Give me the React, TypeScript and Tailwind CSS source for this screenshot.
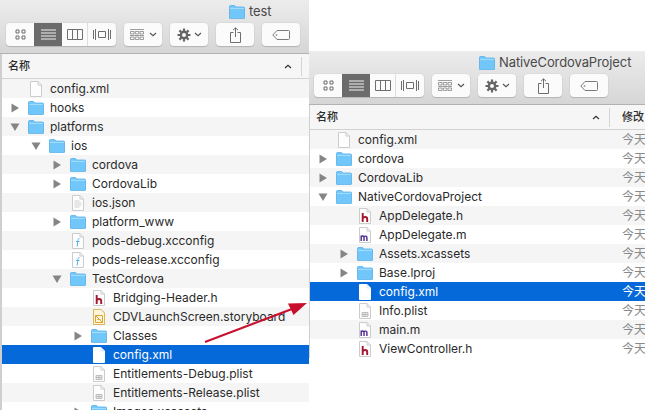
type FileKind = "folder" | "blank" | "doc" | "config" | "h" | "m" | "story" | "plist";

interface Row {
  name: string;
  level: number;
  kind: FileKind;
  arrow?: "right" | "down";
  selected?: boolean;
}

const leftRows: Row[] = [
  { name: "config.xml", level: 0, kind: "blank" },
  { name: "hooks", level: 0, kind: "folder", arrow: "right" },
  { name: "platforms", level: 0, kind: "folder", arrow: "down" },
  { name: "ios", level: 1, kind: "folder", arrow: "down" },
  { name: "cordova", level: 2, kind: "folder", arrow: "right" },
  { name: "CordovaLib", level: 2, kind: "folder", arrow: "right" },
  { name: "ios.json", level: 2, kind: "doc" },
  { name: "platform_www", level: 2, kind: "folder", arrow: "right" },
  { name: "pods-debug.xcconfig", level: 2, kind: "config" },
  { name: "pods-release.xcconfig", level: 2, kind: "config" },
  { name: "TestCordova", level: 2, kind: "folder", arrow: "down" },
  { name: "Bridging-Header.h", level: 3, kind: "h" },
  { name: "CDVLaunchScreen.storyboard", level: 3, kind: "story" },
  { name: "Classes", level: 3, kind: "folder", arrow: "right" },
  { name: "config.xml", level: 3, kind: "blank", selected: true },
  { name: "Entitlements-Debug.plist", level: 3, kind: "plist" },
  { name: "Entitlements-Release.plist", level: 3, kind: "plist" },
  { name: "Images.xcassets", level: 3, kind: "folder", arrow: "right" },
];

const rightRows: Row[] = [
  { name: "config.xml", level: 0, kind: "blank" },
  { name: "cordova", level: 0, kind: "folder", arrow: "right" },
  { name: "CordovaLib", level: 0, kind: "folder", arrow: "right" },
  { name: "NativeCordovaProject", level: 0, kind: "folder", arrow: "down" },
  { name: "AppDelegate.h", level: 1, kind: "h" },
  { name: "AppDelegate.m", level: 1, kind: "m" },
  { name: "Assets.xcassets", level: 1, kind: "folder", arrow: "right" },
  { name: "Base.lproj", level: 1, kind: "folder", arrow: "right" },
  { name: "config.xml", level: 1, kind: "blank", selected: true },
  { name: "Info.plist", level: 1, kind: "plist" },
  { name: "main.m", level: 1, kind: "m" },
  { name: "ViewController.h", level: 1, kind: "h" },
];

function Folder() {
  return (
    <svg viewBox="0 0 16 14" className="h-[14px] w-4">
      <path
        d="M.5 13V1.500a1 1 0 0 1 1-1h4l1.500 1.500h7.500a1 1 0 0 1 1 1V13a.6.6 0 0 1-.6.6H1.100A.6.6 0 0 1 .5 13z"
        fill="#72c7fa"
        stroke="#55aee8"
        strokeWidth="0.8"
      />
      <path d="M1 3.400h14" stroke="#a8dffc" strokeWidth="1" />
    </svg>
  );
}

function FileIcon({ kind, selected }: { kind: FileKind; selected?: boolean }) {
  if (kind === "folder") return <Folder />;
  const fill = selected ? "#ffffff" : "#fdfdfd";
  const edge = selected ? "#ffffff" : "#cccccc";
  return (
    <svg viewBox="0 0 12 16" className="h-4 w-3">
      <path d="M.5.5h7.500l3.500 3.500v11.500H.5z" fill={fill} stroke={edge} />
      <path d="M8 .5V4h3.500" fill="none" stroke={selected ? "#dbe8f8" : "#cccccc"} />
      {kind === "doc" && (
        <path d="M2.500 6h5M2.500 8h7M2.500 10h7M2.500 12h5" stroke="#d0d0d0" strokeWidth="1" />
      )}
      {kind === "plist" && (
        <path d="M3 9.500h6v4H3zM3 11.500h6M6 9.500v4" fill="#e8e8e8" stroke="#b4b4b4" strokeWidth="0.8" />
      )}
      {kind === "config" && (
        <path d="M7.500 5.500C6 5.300 6 7 5.800 8.500L5.200 13.500M4 8.500h3.500" fill="none" stroke="#56b2ee" strokeWidth="1" />
      )}
      {kind === "h" && (
        <path d="M3.700 5v9M3.700 10.300c.7-1.600 4.500-2 4.500.6V14" fill="none" stroke="#a3172f" strokeWidth="1.900" />
      )}
      {kind === "m" && (
        <path
          d="M2.200 8.500V14M2.200 9.800c.6-1.100 2.800-1.300 2.800.3V14M5 10.100c.5-1.400 2.900-1.400 2.900.3V14"
          fill="none"
          stroke="#4d2a92"
          strokeWidth="1.400"
        />
      )}
      {kind === "story" && (
        <>
          <path d="M.5.5h7.500l3.500 3.500v11.500H.5z" fill="#fdf5dc" stroke="#dcb75a" />
          <path d="M2.500 6.500h7v7h-7zM2.500 6.500l7 7M4.500 10.500h3" fill="none" stroke="#e0a52f" strokeWidth="1" />
        </>
      )}
    </svg>
  );
}

function Arrow({ dir }: { dir?: "right" | "down" }) {
  if (!dir) return <span className="w-[18px] shrink-0" />;
  return (
    <span className="flex w-[18px] shrink-0 items-center">
      <svg viewBox="0 0 10 10" className="h-[10px] w-[10px]">
        {dir === "right" ? (
          <path d="M1.500 0.500L9 5L1.500 9.500z" fill="#858585" />
        ) : (
          <path d="M0.500 1.500H9.500L5 9z" fill="#858585" />
        )}
      </svg>
    </span>
  );
}

function ToolButton({ children }: { children: React.ReactNode }) {
  return (
    <div className="flex h-[23px] w-[38px] items-center justify-center gap-[3px] rounded-[4px] bg-[#fbfbfb] shadow-[0_1px_1px_#b4b4b4,0_0_0_0.5px_#d4d4d4]">
      {children}
    </div>
  );
}

function SmallChevron() {
  return (
    <svg viewBox="0 0 8 5" className="h-[5px] w-2">
      <path d="M1 1l3 2.600L7 1" fill="none" stroke="#555555" strokeWidth="1.200" />
    </svg>
  );
}

function Toolbar() {
  return (
    <div className="flex items-center gap-2">
      <div className="flex h-[23px] w-[110px] rounded-[4px] bg-[#fbfbfb] shadow-[0_1px_1px_#b4b4b4,0_0_0_0.5px_#d4d4d4]">
        <div className="flex w-[28px] items-center justify-center">
          <svg viewBox="0 0 11 11" className="h-[11px] w-[11px]">
            <path d="M1 1h3v3H1zM7 1h3v3H7zM1 7h3v3H1zM7 7h3v3H7z" fill="none" stroke="#6e6e6e" />
          </svg>
        </div>
        <div className="flex w-[28px] items-center justify-center bg-[#6b6b6b]">
          <svg viewBox="0 0 15 11" className="h-[11px] w-[15px]">
            <path d="M0 1h15M0 4h15M0 7h15M0 10h15" stroke="#f2f2f2" />
          </svg>
        </div>
        <div className="flex w-[26px] items-center justify-center border-r border-[#dddddd]">
          <svg viewBox="0 0 16 11" className="h-[11px] w-4">
            <path d="M.5 .5h15v10H.5zM5.500 .5v10M10.500 .5v10" fill="none" stroke="#6e6e6e" />
          </svg>
        </div>
        <div className="flex flex-1 items-center justify-center">
          <svg viewBox="0 0 18 11" className="h-[11px] w-[18px]">
            <path d="M.5 1v9M2.500 0v11M5.500 2.500h7v6h-7zM15.500 0v11M17.500 1v9" fill="none" stroke="#6e6e6e" />
          </svg>
        </div>
      </div>
      <ToolButton>
        <svg viewBox="0 0 14 12" className="h-3 w-[14px]">
          <path
            d="M0 .5h14M.5 2.500h3.500v2.500H.5zM5.300 2.500h3.500v2.500H5.300zM10 2.500h3.500v2.500H10zM.5 8h3.500v2.500H.5zM5.300 8h3.500v2.500H5.300zM10 8h3.500v2.500H10zM0 6.500h14"
            fill="none"
            stroke="#777777"
            strokeWidth="0.7"
          />
        </svg>
        <span className="ml-[2px]">
          <SmallChevron />
        </span>
      </ToolButton>
      <ToolButton>
        <svg viewBox="0 0 14 14" className="h-[14px] w-[14px]">
          <circle cx="7" cy="7" r="3.200" fill="none" stroke="#666666" strokeWidth="2.400" />
          <path
            d="M7 .5v3M7 10.500v3M.5 7h3M10.500 7h3M2.400 2.400l2.100 2.100M9.500 9.500l2.100 2.100M11.600 2.400L9.500 4.500M4.500 9.500l-2.100 2.100"
            stroke="#666666"
            strokeWidth="2.200"
          />
        </svg>
        <SmallChevron />
      </ToolButton>
      <ToolButton>
        <svg viewBox="0 0 11 16" className="h-4 w-[11px]">
          <path d="M3.500 5.500H.5v10h10v-10h-3M5.500 10V1M3 3.200L5.500.8 8 3.200" fill="none" stroke="#6e6e6e" />
        </svg>
      </ToolButton>
      <ToolButton>
        <svg viewBox="0 0 18 10" className="h-[10px] w-[18px]">
          <path d="M5 .5h11.500a1 1 0 0 1 1 1v7a1 1 0 0 1-1 1H5L.8 5z" fill="none" stroke="#7a7a7a" />
          <circle cx="4.500" cy="5" r="0.900" fill="#9a9a9a" />
        </svg>
      </ToolButton>
    </div>
  );
}

function FileRow({ row, index, showDate }: { row: Row; index: number; showDate?: boolean }) {
  const bg = row.selected ? "bg-[#0669d9]" : index % 2 === 0 ? "bg-[#f5f5f5]" : "bg-white";
  return (
    <div
      className={`flex h-[19px] shrink-0 items-center text-[12px] leading-[19px] ${bg} ${
        row.selected ? "text-white" : "text-[#2a2a2a]"
      }`}
    >
      <div className="flex w-[300px] shrink-0 items-center pl-2">
        <span className="shrink-0" style={{ width: row.level * 21 }} />
        <Arrow dir={row.arrow} />
        <span className="flex w-[22px] shrink-0 justify-center pr-[6px]">
          <FileIcon kind={row.kind} selected={row.selected} />
        </span>
        <span className="whitespace-nowrap">{row.name}</span>
      </div>
      {showDate && (
        <span className={`whitespace-nowrap pl-3 ${row.selected ? "text-white" : "text-[#8a8a8a]"}`}>今天</span>
      )}
    </div>
  );
}

function FinderWindow({
  title,
  titleClass,
  rows,
  barClass,
  listClass,
  showDate,
}: {
  title: string;
  titleClass: string;
  rows: Row[];
  barClass: string;
  listClass: string;
  showDate?: boolean;
}) {
  return (
    <>
      <div className={`h-[54px] border-b border-[#b2b2b2] bg-gradient-to-b from-[#ececec] to-[#d6d6d6] ${barClass}`}>
        <div className={`flex h-[23px] items-center gap-[4px] text-[13px] tracking-[-0.1px] text-[#4a4a4a] ${titleClass}`}>
          <Folder />
          <span>{title}</span>
        </div>
        <Toolbar />
      </div>
      <div className={`flex flex-col ${listClass}`}>
        <div className="flex h-[25px] shrink-0 items-center border-b border-[#d2d2d2] bg-[#f6f6f6] text-[11px] font-medium text-[#2c2c2c]">
          <div className="flex h-[19px] w-[300px] shrink-0 items-center justify-between border-r border-[#d4d4d4] pl-[6px] pr-[9px]">
            <span>名称</span>
            <svg viewBox="0 0 8 5" className="h-[5px] w-2">
              <path d="M1 4l3-2.600L7 4" fill="none" stroke="#333333" strokeWidth="1.200" />
            </svg>
          </div>
          {showDate && <span className="whitespace-nowrap pl-3">修改</span>}
        </div>
        {rows.map((row, i) => (
          <FileRow key={i} row={row} index={i} showDate={showDate} />
        ))}
      </div>
    </>
  );
}

export default function App() {
  return (
    <div className="relative flex h-[410px] w-[645px] overflow-hidden bg-white font-['Inter','Noto_Sans_CJK_SC',sans-serif]">
      <div className="w-[309px] shrink-0 overflow-hidden">
        <FinderWindow
          title="test"
          titleClass="pl-[223px]"
          barClass="pl-[6px]"
          listClass="border-l-2 border-[#cfcfcf]"
          rows={leftRows}
        />
      </div>
      <div className="mt-[51px] flex-1 overflow-hidden">
        <FinderWindow
          title="NativeCordovaProject"
          titleClass="pl-[165px]"
          barClass="pl-[5px]"
          listClass="border-l border-[#cfcfcf]"
          rows={rightRows}
          showDate
        />
      </div>
      {/* red arrow drawn over both windows */}
      <svg viewBox="0 0 645 410" className="absolute inset-0 h-[410px] w-[645px]">
        <path d="M205 342L292 309" stroke="#c8102e" strokeWidth="2" />
        <path d="M307 303L288 303.500L293.500 315z" fill="#c8102e" />
      </svg>
    </div>
  );
}
